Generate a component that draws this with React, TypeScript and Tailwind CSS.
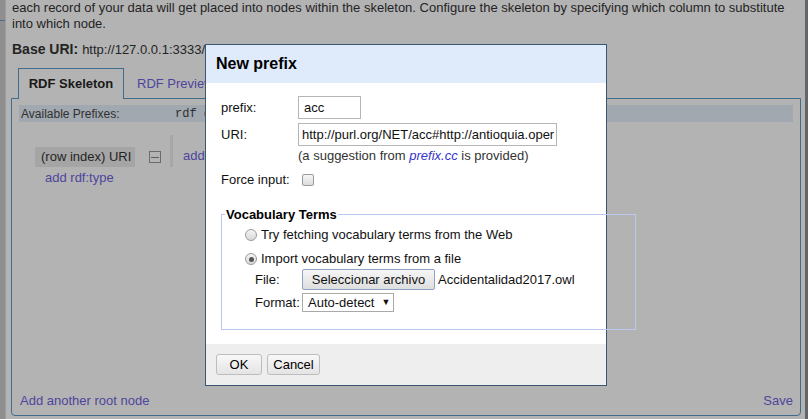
import React from 'react'

function Radio(props: { checked?: boolean }) {
  return (
    <span className="flex h-[12px] w-[12px] shrink-0 items-center justify-center rounded-full border border-[#9a9a9a] bg-gradient-to-b from-[#f4f4f4] to-[#d8d8d8]">
      {props.checked && <span className="h-[5px] w-[5px] rounded-full bg-[#555]" />}
    </span>
  )
}

function NewPrefixDialog() {
  return (
    <div className="absolute left-[205px] top-[44px] flex h-[342px] w-[402px] flex-col border border-[#3b5670] bg-white text-[13px] text-[#111]">
      <div className="flex h-[38px] items-center bg-[#dfeafb] pl-[10px] text-[16px] font-bold text-black">
        New prefix
      </div>

      <div className="flex-1 pl-[15px] pt-[13px]">
        <div className="flex h-[23px] items-center">
          <span className="w-[77px]">prefix:</span>
          <div className="flex h-[23px] w-[63px] items-center border border-[#b5b5b5] px-[5px]">acc</div>
        </div>
        <div className="mt-[4px] flex h-[23px] items-center">
          <span className="w-[77px]">URI:</span>
          <div className="flex h-[23px] w-[259px] items-center overflow-hidden whitespace-nowrap border border-[#b5b5b5] px-[3px]">
            http://purl.org/NET/acc#http://antioquia.oper
          </div>
        </div>
        <div className="ml-[77px] flex h-[19px] items-center text-[#333]">
          (a suggestion from&nbsp;<span className="italic text-[#3434c8]">prefix.cc</span>&nbsp;is provided)
        </div>
        <div className="mt-[8px] flex h-[14px] items-center">
          <span className="w-[81px]">Force input:</span>
          <span className="h-[12px] w-[12px] rounded-[2px] border border-[#9a9a9a] bg-gradient-to-b from-[#f6f6f6] to-[#dcdcdc]" />
        </div>

        <fieldset className="relative mt-[20px] w-[415px] border border-[#b9c9f0] pb-[17px] pl-[3px]">
          <legend className="px-[1px] text-[13px] font-bold leading-[15px] text-black">Vocabulary Terms</legend>
          <div className="pl-[20px]">
            <div className="mt-[5px] flex h-[16px] items-center gap-[4px]">
              <Radio />
              <span>Try fetching vocabulary terms from the Web</span>
            </div>
            <div className="mt-[8px] flex h-[16px] items-center gap-[4px]">
              <Radio checked />
              <span>Import vocabulary terms from a file</span>
            </div>
            <div className="mt-[2px] flex h-[21px] items-center pl-[10px]">
              <span className="w-[47px]">File:</span>
              <span className="flex h-[21px] w-[133px] items-center justify-center rounded-[2px] border border-[#8ea4c4] bg-gradient-to-b from-[#f6f6f6] to-[#dedede]">
                Seleccionar archivo
              </span>
              <span className="ml-[3px]">Accidentalidad2017.owl</span>
            </div>
            <div className="mt-[3px] flex h-[19px] items-center pl-[10px]">
              <span className="w-[47px]">Format:</span>
              <span className="flex h-[19px] w-[92px] items-center border border-[#a9a9a9] bg-white pl-[5px]">
                Auto-detect
                <span className="ml-[7px] text-[9px]">▼</span>
              </span>
            </div>
          </div>
        </fieldset>
      </div>

      <div className="flex h-[41px] gap-[5px] bg-[#eeeeee] pl-[10px] pt-[10px]">
        <span className="flex h-[21px] w-[46px] items-center justify-center rounded-[3px] border border-[#bdbdbd] bg-gradient-to-b from-[#f8f8f8] to-[#e4e4e4] text-black">
          OK
        </span>
        <span className="flex h-[21px] w-[53px] items-center justify-center rounded-[3px] border border-[#bdbdbd] bg-gradient-to-b from-[#f8f8f8] to-[#e4e4e4] text-black">
          Cancel
        </span>
      </div>
    </div>
  )
}

// page behind the modal, drawn straight in its dimmed colours
export default function App() {
  return (
    <div className="relative h-[419px] w-[808px] bg-[#b3b3b3] font-['Liberation_Sans',Arial,sans-serif] text-[13px] text-[#242424]">
      <div className="flex h-full bg-[#b3b3b3]">
        <div className="w-[5px] bg-[#8f8f8f]">
          <div className="mt-[20px] h-[1px] w-full bg-[#4c6c89]" />
        </div>
        <div className="w-[1px] bg-[#9d9d9d]" />

        <div className="flex flex-1 flex-col bg-[#b3b3b3] pr-[4px]">
          <p className="pl-[6px] leading-[16px]">
            each record of your data will get placed into nodes within the skeleton. Configure the skeleton by specifying which column to substitute
            <br />
            into which node.
          </p>
          <div className="mt-[7px] flex items-baseline pl-[6px]">
            <span className="text-[14px] font-bold">Base URI:</span>
            <span className="ml-[4px]">http://127.0.0.1:3333/rdf-schema/</span>
          </div>

          <div className="ml-[12px] mt-[8px] flex h-[31px]">
            <div className="relative z-10 flex h-[31px] w-[106px] items-center justify-center border border-b-0 border-[#406d8c] bg-[#b3b3b3] font-bold text-[#181818]">
              RDF Skeleton
            </div>
            <div className="flex items-center pl-[13px] text-[#4e459d]">RDF Preview</div>
          </div>

          <div className="-mt-[1px] ml-[5px] flex h-[318px] flex-col rounded-b-[4px] border border-[#406d8c] px-[7px] pb-[5px] pt-[6px]">
            <div className="flex h-[17px] items-center bg-[#a1a8b0] pl-[2px] text-[12px] text-[#303030]">
              <span className="w-[154px]">Available Prefixes:</span>
              <span className="font-['Liberation_Mono',monospace]">rdf dcterms foaf owl rdfs xsd</span>
            </div>

            <div className="ml-[16px] mt-[13px] flex h-[32px] items-end">
              <div className="flex h-[20px] w-[100px] items-center bg-[#a5a5a5] pl-[6px]">(row index) URI</div>
              <div className="mb-[4px] ml-[14px] flex h-[12px] w-[12px] items-center justify-center border border-[#6b6b6b]">
                <span className="h-[1px] w-[8px] bg-[#5f5f5f]" />
              </div>
              <div className="ml-[9px] h-[32px] w-[3px] bg-[#a7a7a7]" />
              <div className="mb-[2px] ml-[10px] text-[#4e459d]">add property</div>
            </div>
            <div className="ml-[26px] mt-[1px] text-[#4e459d]">add rdf:type</div>

            <div className="mt-auto flex justify-between pl-[1px] text-[#4e459d]">
              <span>Add another root node</span>
              <span>Save</span>
            </div>
          </div>
        </div>

        <div className="w-[3px] bg-[#64646b]" />
      </div>

      <NewPrefixDialog />
    </div>
  )
}
